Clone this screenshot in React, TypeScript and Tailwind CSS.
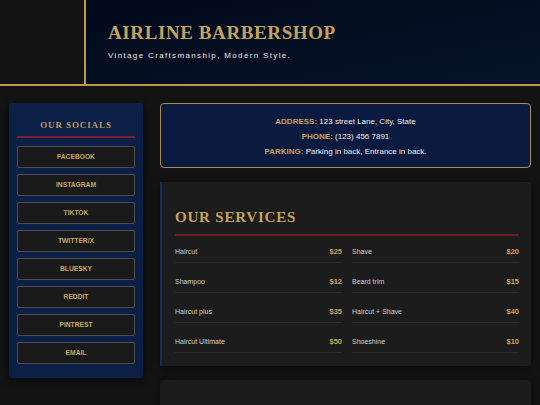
import React from "react";

const SOCIALS = ["Facebook", "Instagram", "TikTok", "Twitter/X", "Bluesky", "Reddit", "Pintrest", "Email"];

const SERVICES: [string, string][] = [
  ["Haircut", "$25"],
  ["Shave", "$20"],
  ["Shampoo", "$12"],
  ["Beard trim", "$15"],
  ["Haircut plus", "$35"],
  ["Haircut + Shave", "$40"],
  ["Haircut Ultimate", "$50"],
  ["Shoeshine", "$10"],
];

const INFO: [string, string][] = [
  ["ADDRESS:", "123 street Lane, City, State"],
  ["PHONE:", "(123) 456 7891"],
  ["PARKING:", "Parking in back, Entrance in back."],
];

export default function App() {
  return (
    <div className="min-h-[405px] w-[540px] overflow-hidden bg-[#131313] font-['Liberation_Sans',Arial,sans-serif]">
      {/* ---- HEADER ---- */}
      <header className="flex h-[86px] border-b-2 border-[#b89a4e]">
        <div className="w-[84px] shrink-0" />
        <div className="flex flex-1 flex-col border-l-2 border-[#b89a4e] bg-gradient-to-br from-[#020a1b] to-[#061329] pl-[22px] pt-[21px]">
          <h1 className="font-['Liberation_Serif',serif] text-[19px] font-bold leading-[24px] tracking-[0.6px] text-[#c4a35a]">
            AIRLINE BARBERSHOP
          </h1>
          <p className="mt-[6px] text-[8px] leading-[10px] tracking-[1.35px] text-[#e6e6e6]">
            Vintage Craftsmanship, Modern Style.
          </p>
        </div>
      </header>

      {/* ---- MAIN ---- */}
      <main className="flex items-start gap-[17px] px-[9px] pt-[17px]">
        {/* socials sidebar */}
        <aside className="w-[134px] shrink-0 rounded-[3px] bg-[#0c1f47] px-[8px] pb-[14px] pt-[16px] shadow-[0_2px_8px_rgba(0,0,0,0.6)]">
          <h2 className="text-center font-['Liberation_Serif',serif] text-[9px] font-bold leading-[12px] tracking-[0.9px] text-[#b89a5a]">
            OUR SOCIALS
          </h2>
          <div className="mt-[5px] h-[2px] bg-[#7b1f30]" />
          <div className="mt-[8px] flex flex-col gap-[6px]">
            {SOCIALS.map((s) => (
              <div
                key={s}
                className="flex h-[22px] items-center justify-center rounded-[2px] border border-[#4d4d4d] bg-[#1a1a1a] text-[6.7px] font-bold uppercase text-[#c9a75c]"
              >
                {s}
              </div>
            ))}
          </div>
        </aside>

        {/* right column */}
        <div className="flex flex-1 flex-col gap-[14px]">
          {/* info box */}
          <section className="rounded-[4px] border border-[#a68b4f] bg-[#0b1b3f] pb-[8px] pt-[10px] text-center text-[8px] leading-[15px] text-[#ececec]">
            {INFO.map(([label, value]) => (
              <p key={label}>
                <span className="font-bold text-[#c4a35a]">{label}</span> {value}
              </p>
            ))}
          </section>

          {/* services */}
          <section className="rounded-r-[4px] border-l-2 border-[#172c5e] bg-[#1c1c1c] pb-[13px] pl-[13px] pr-[12px] pt-[26px] shadow-[0_2px_8px_rgba(0,0,0,0.5)]">
            <h2 className="font-['Liberation_Serif',serif] text-[15px] font-bold leading-[18px] tracking-[0.8px] text-[#c4a35a]">
              OUR SERVICES
            </h2>
            <div className="mt-[8px] h-[2px] bg-[#6e1d24]" />
            <div className="mt-[11px] grid grid-cols-2 gap-x-[10px] gap-y-[14px]">
              {SERVICES.map(([name, price]) => (
                <div
                  key={name}
                  className="flex items-center justify-between border-b border-[#2b2b2b] pb-[5px] text-[7px] leading-[10px]"
                >
                  <span className="text-[#cfcfcf]">{name}</span>
                  <span className="text-[7.5px] font-bold text-[#c4a35a]">{price}</span>
                </div>
              ))}
            </div>
          </section>

          {/* next panel, cut off by the viewport */}
          <section className="h-[80px] rounded-[4px] bg-[#1c1c1c] shadow-[0_2px_8px_rgba(0,0,0,0.5)]" />
        </div>
      </main>
    </div>
  );
}
